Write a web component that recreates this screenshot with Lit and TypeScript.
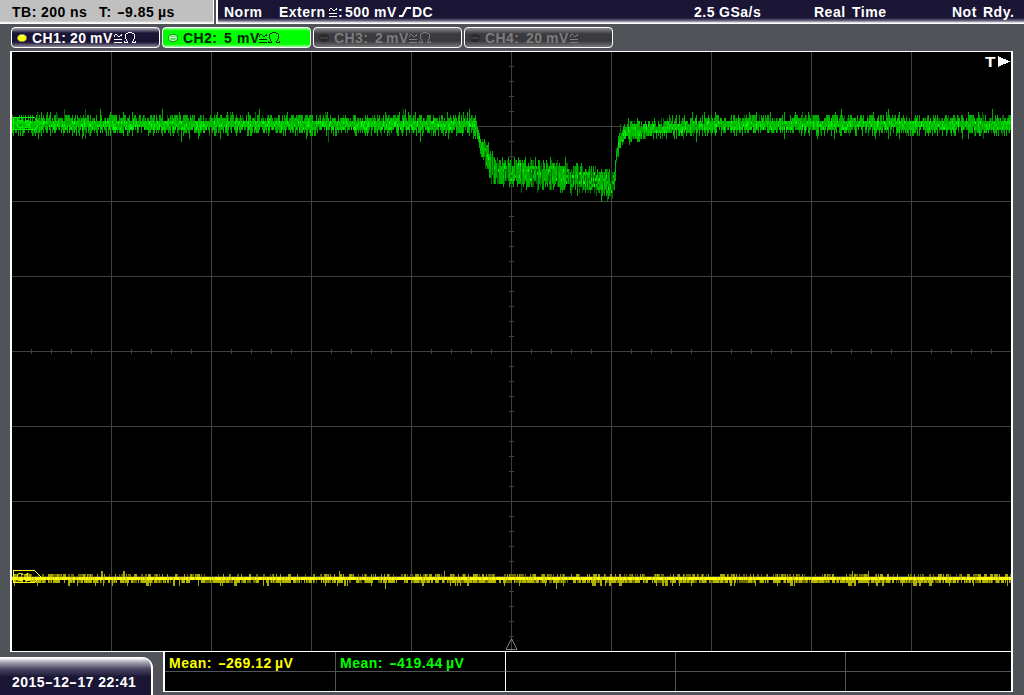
import { LitElement, html, svg, css } from "lit";
import { customElement } from "lit/decorators.js";

type Cells = Record<string, string>;

function rng(seed: number) {
  return () => {
    seed = (seed + 0x6d2b79f5) | 0;
    let t = Math.imul(seed ^ (seed >>> 15), 1 | seed);
    t = (t + Math.imul(t ^ (t >>> 7), 61 | t)) ^ t;
    return ((t ^ (t >>> 14)) >>> 0) / 4294967296;
  };
}

const add = (cells: Cells, color: string, x: number, y: number, h = 3) => {
  cells[color] = (cells[color] ?? "") + `M${x} ${y}h1v${h}h-1z`;
};

// Mean level of channel 2 across the screen, as x/y knots.
const LEVEL: [number, number][] = [
  [0, 124.5], [474, 124.5], [477, 131], [480, 144], [483, 152], [487, 161], [492, 169],
  [500, 172], [520, 172], [550, 175], [580, 179], [605, 183], [612, 187], [614, 178],
  [616, 156], [618, 146], [621, 138], [626, 133], [636, 130.5], [660, 128.5], [690, 126.5],
  [720, 124.5], [1024, 124.5],
];

function level(x: number) {
  for (let i = 1; i < LEVEL.length; i++) {
    const [x1, y1] = LEVEL[i];
    if (x <= x1) {
      const [x0, y0] = LEVEL[i - 1];
      return y0 + ((y1 - y0) * (x - x0)) / (x1 - x0);
    }
  }
  return 124.5;
}

function greenTrace(): Cells {
  const r = rng(41);
  const cells: Cells = {};
  const snap = (v: number) => 109 + Math.round((v - 109) / 3) * 3;
  for (let x = 12; x < 1011; x++) {
    const m = level(x);
    const dip = x > 484 && x < 614;
    const reach = () => {
      const u = r();
      const base = dip ? 6 + r() * 10 : 2.5 + r() * 8.5;
      return base + (u > 0.985 ? 8 : u > 0.95 ? 5.5 : u > 0.8 ? 2.5 : 0);
    };
    const top = snap(m - reach());
    const bottom = Math.max(top + 6, snap(m + reach()));
    const dark = r() < (dip ? 0.38 : 0.18);
    for (let y = top; y < bottom; y += 3) {
      const d = Math.abs(y + 1.5 - m);
      const u = r();
      let c = dark ? "#006800" : "#00ac00";
      if (d < (dip ? 8 : 4.5)) {
        if (u > (dip ? 0.95 : 0.86)) c = "#00f800";
        else if (u > (dip ? 0.74 : 0.4)) c = "#00cc00";
        else if (!dip) c = "#00ac00";
      } else if (d < 8 && u > 0.75) c = "#00cc00";
      add(cells, c, x, y);
    }
  }
  return cells;
}

function yellowTrace(): Cells {
  const r = rng(97);
  const cells: Cells = {};
  let up = 0;
  let down = 0;
  for (let x = 12; x < 1011; x++) {
    if (r() < 0.75) up = r();
    if (r() < 0.75) down = r();
    add(cells, r() < 0.72 ? "#ffff00" : "#d8d800", x, 577);
    if (up > 0.56) add(cells, up > 0.76 ? "#a8a800" : "#6c6c00", x, 574);
    if (up > 0.99) add(cells, "#a8a800", x, 571);
    if (down > 0.2) add(cells, down > 0.45 ? "#b4b400" : "#6c6c00", x, 580);
    if (down > 0.9) add(cells, "#a8a800", x, 583);
    if (down > 0.996) add(cells, "#a8a800", x, 586);
  }
  return cells;
}

const GREEN = Object.entries(greenTrace());
const YELLOW = Object.entries(yellowTrace());

function gridPath() {
  let d = "";
  for (let x = 111; x < 1000; x += 100) d += `M${x} 52h1v599h-1z`;
  for (let y = 126; y < 640; y += 75) d += `M12 ${y}h999v1h-999z`;
  for (let x = 31; x < 1011; x += 20) if (x % 100 !== 11) d += `M${x} 349h1v5h-1z`;
  for (let y = 66; y < 650; y += 15) d += `M509 ${y}h5v1h-5z`;
  return d;
}
const GRID = gridPath();

// Splits a reading at its dashes so that each one is drawn as a wide bar.
const wide = (s: string) =>
  s.split(/(-)/).map((p) => (p === "-" ? html`<span class="dash">-</span>` : p));

const acIcon = html`<svg class="ac" width="8" height="10" shape-rendering="crispEdges">
  <path fill="currentColor" d="M1 0h2v1h-2zM0 1h1v2h-1zM3 1h1v1h-1zM4 2h2v1h-2zM6 1h1v1h-1zM7 0h1v2h-1zM0 5h8v1h-8zM0 8h8v1h-8z"/></svg>`;
const ohmIcon = html`<svg class="ohm" width="12" height="12" shape-rendering="crispEdges">
  <path fill="currentColor" d="M4 0h4v1h-4zM2 1h2v1h-2zM8 1h2v1h-2zM1 2h1v5h-1zM10 2h1v5h-1zM2 7h1v2h-1zM9 7h1v2h-1zM3 9h1v2h-1zM8 9h1v2h-1zM0 10h4v1h-4zM8 10h4v1h-4zM0 9h1v1h-1zM11 9h1v1h-1z"/></svg>`;

@customElement("scope-channel")
class ScopeChannel extends LitElement {
  static properties = { name: {}, value: {}, ohm: { type: Boolean } };
  declare name: string;
  declare value: string;
  declare ohm: boolean;
  static styles = css`
    :host {
      display: grid;
      box-sizing: border-box;
      width: 149px;
      height: 21px;
      padding-left: 5px;
      border: 1px solid #fff;
      border-radius: 4px;
      align-items: start;
      font: bold 14px/20px "Liberation Sans", Arial, sans-serif;
      letter-spacing: 0.45px;
      white-space: nowrap;
      color: #fff;
      background: linear-gradient(#a9a8b4 0, #1a1535 5px, #1a1535 14px, #8d8b9b 19px);
    }
    :host([kind="one"]) { grid-template-columns: 15px 38px 20px 24px 10px 13px; }
    :host([kind="two"]) { grid-template-columns: 15px 41px 13px 22px 9px 13px; color: #002000; background: linear-gradient(#9f9 0, #0f0 3px, #0f0 16px, #9f9 19px); }
    :host([kind="three"]) { grid-template-columns: 15px 41px 11px 23px 10px 13px; }
    :host([kind="four"]) { grid-template-columns: 15px 41px 20px 24px 10px; }
    :host([kind="three"]), :host([kind="four"]) { color: #7c7c7c; background: linear-gradient(#8b8b8d 0, #3a393e 6px, #3a393e 13px, #77777a 19px); }
    .lamp { width: 10px; height: 8px; margin-top: 6px; }
    .ac { margin-top: 6px; }
    .ohm { margin-top: 4px; }
  `;
  lamp() {
    const kind = this.getAttribute("kind");
    if (kind === "one") return svg`<ellipse cx="5" cy="4" rx="4.6" ry="3.8" fill="#ff0" stroke="#777" stroke-width=".8"/><path d="M3 2h4" stroke="#ffc"/>`;
    if (kind === "two") return svg`<ellipse cx="5" cy="4" rx="4.5" ry="3.5" fill="#4d4" stroke="#3a7a3a" /><ellipse cx="5" cy="4" rx="3.6" ry="2.6" fill="none" stroke="#bfb" /><path d="M2 3.5h6" stroke="#cfc" />`;
    return svg`<ellipse cx="5" cy="4" rx="5" ry="4" fill="#29292b"/><path d="M1 4h8" stroke="#555"/>`;
  }
  render() {
    const [n, unit] = this.value.split(" ");
    return html`<svg class="lamp">${this.lamp()}</svg><span>${this.name}:</span><span>${n}</span><span>${unit}</span>${acIcon}${this.ohm ? ohmIcon : ""}`;
  }
}

@customElement("scope-screen")
class ScopeScreen extends LitElement {
  static styles = css`
    :host { display: block; height: 601px; }
    svg { display: block; }
    .tag { font: 11px "Liberation Sans", Arial, sans-serif; }
    .trig { font: bold 15px "Liberation Sans", Arial, sans-serif; }
  `;
  render() {
    return html`<svg width="1003" height="601" viewBox="10 51 1003 601" shape-rendering="crispEdges">
      <path d="M10 51h1003v601h-1003z" fill="#fff" />
      <path d="M12 52h999v599h-999z" fill="#000" />
      <path d=${GRID} fill="#404040" />
      ${GREEN.map(([c, d]) => svg`<path fill=${c} d=${d} />`)}
      ${YELLOW.map(([c, d]) => svg`<path fill=${c} d=${d} />`)}
      <path d="M13.5 117.5h21l6 6l-6 6h-21z" fill="none" stroke="#00ff00" />
      <text class="tag" x="16" y="127.5" fill="#00ff00">C2</text>
      <path d="M13.5 570.5h21l6 6l-6 6h-21z" fill="none" stroke="#ffff00" />
      <text class="tag" x="16" y="580.5" fill="#ffff00">C1</text>
      <path d="M511.5 638.5l-5.5 11h11z" fill="none" stroke="#808080" shape-rendering="auto" />
      <text class="trig" x="985" y="67" fill="#fff" textLength="11" lengthAdjust="spacingAndGlyphs">T</text>
      <path d="M998 56v11l12 -5.5z" fill="#fff" />
    </svg>`;
  }
}

@customElement("app-root")
class AppRoot extends LitElement {
  static styles = css`
    :host {
      display: flex;
      flex-direction: column;
      width: 1024px;
      height: 695px;
      overflow: hidden;
      background: #505459;
      color: #fff;
      font: bold 14px/24px "Liberation Sans", Arial, sans-serif;
      letter-spacing: 0.5px;
      white-space: nowrap;
    }
    .dash { display: inline-block; width: 8px; letter-spacing: 0; transform: scaleX(1.7); transform-origin: 0 50%; }
    .top { display: flex; gap: 2px; height: 24px; }
    .time {
      display: grid;
      box-sizing: border-box;
      width: 214px;
      height: 24px;
      padding-left: 12px;
      grid-template-columns: 29px 29px 29px 18px 41px 20px;
      color: #000;
      background: linear-gradient(#c0c0c0 21px, #fff 23px);
      border-right: 1px solid #fff;
    }
    .trigger {
      display: grid;
      box-sizing: border-box;
      width: 808px;
      height: 24px;
      padding-left: 6px;
      border-left: 2px solid #fff;
      grid-template-columns: 55px 50px 9px 7px 29px 25px 13px 282px 25px 95px 38px 100px 31px 40px;
      background: linear-gradient(#1a1535 18px, #77738a 21px, #fff 23px);
    }
    .ac { margin-top: 8px; }
    .slope { margin-top: 6px; }
    .channels { display: flex; gap: 2px; height: 21px; padding: 3px 0 3px 11px; }
    scope-screen { margin-left: 10px; }
    .foot { display: flex; height: 43px; }
    .date {
      box-sizing: border-box;
      width: 153px;
      height: 38px;
      margin: 5px 10px 0 0;
      padding: 13px 0 0 12px;
      border-right: 2px solid #fff;
      border-radius: 0 11px 0 0;
      letter-spacing: 0.45px;
      background: linear-gradient(#fff 0, #fff 1px, #aaa8b5 5px, #4b4763 12px, #1a1535 20px);
    }
    .measure {
      display: grid;
      box-sizing: border-box;
      width: 850px;
      height: 40px;
      border: solid #fff;
      border-width: 0 2px 1px;
      grid-template-columns: 171px 170px 170px 170px 165px;
      grid-template-rows: 20px 19px;
      background: #000;
    }
    .cell { box-sizing: border-box; padding-left: 4px; line-height: 22px; border-right: 1px solid #505459; }
    .cell.head { border-bottom: 1px solid #505459; }
    .cell.split { border-right-color: #fff; }
    .cell.last { border-right: 0; }
    .reading { display: grid; grid-template-columns: 49px 57px 24px; }
    .reading.one { color: #ff0; }
    .reading.two { color: #0f0; }
  `;
  render() {
    return html`
      <div class="top">
        <div class="time"><span>TB:</span><span>200</span><span>ns</span><span>T:</span><span>${wide("-9.85")}</span><span>µs</span></div>
        <div class="trigger">
          <span>Norm</span><span>Extern</span>${acIcon}<span>:</span><span>500</span><span>mV</span>
          <svg class="slope" width="13" height="12"><path d="M0 10h3.5l4 -8h4.5" fill="none" stroke="#fff" stroke-width="2" /></svg>
          <span>DC</span><span>2.5</span><span>GSa/s</span><span>Real</span><span>Time</span><span>Not</span><span>Rdy.</span>
        </div>
      </div>
      <div class="channels">
        <scope-channel kind="one" name="CH1" value="20 mV" ohm></scope-channel>
        <scope-channel kind="two" name="CH2" value="5 mV" ohm></scope-channel>
        <scope-channel kind="three" name="CH3" value="2 mV" ohm></scope-channel>
        <scope-channel kind="four" name="CH4" value="20 mV"></scope-channel>
      </div>
      <scope-screen></scope-screen>
      <div class="foot">
        <div class="date">${wide("2015-12-17 22:41")}</div>
        <div class="measure">
          <div class="cell head reading one"><span>Mean:</span><span>${wide("-269.12")}</span><span>µV</span></div>
          <div class="cell head split reading two"><span>Mean:</span><span>${wide("-419.44")}</span><span>µV</span></div>
          <div class="cell head"></div><div class="cell head"></div><div class="cell head last"></div>
          <div class="cell"></div><div class="cell split"></div><div class="cell"></div><div class="cell"></div><div class="cell last"></div>
        </div>
      </div>`;
  }
}
